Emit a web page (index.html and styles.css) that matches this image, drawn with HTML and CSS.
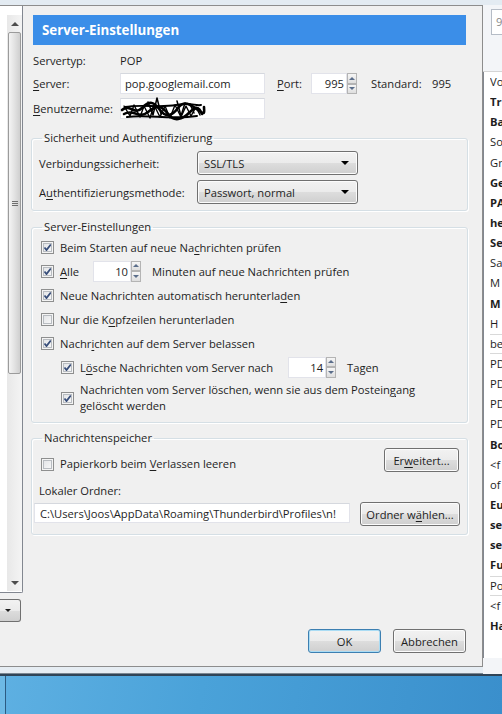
FILE: index.html
```html
<!DOCTYPE html>
<html lang="de">
<head>
    <meta charset="UTF-8">
    <title>Konten-Einstellungen</title>
    <link rel="stylesheet" href="styles.css">
</head>
<body>
<div id="screen">
    <div id="workspace">
        <div id="dialog">
            <div id="client">
                <!-- Kontenbaum links, nur der Rand mit Scrollbar ist sichtbar -->
                <div id="tree-pane">
                    <div class="tree-box">
                        <div class="scrollbar">
                            <div class="sb-btn"><span class="arrow-up"></span></div>
                            <div class="sb-thumb"><span class="grip"></span></div>
                            <div class="sb-track"></div>
                            <div class="sb-btn"><span class="arrow-down"></span></div>
                        </div>
                    </div>
                    <div class="tree-actions"><span class="arrow-down small"></span></div>
                </div>

                <div id="settings">
                    <div class="page-title">Server-Einstellungen</div>

                    <div class="server-rows">
                        <div class="row">
                            <span class="lbl">Servertyp:</span>
                            <span>POP</span>
                        </div>
                        <div class="row">
                            <span class="lbl"><u>S</u>erver:</span>
                            <span class="textbox host">pop.googlemail.com</span>
                            <span class="lbl-port"><u>P</u>ort:</span>
                            <span class="spinner port"><span class="spin-value">995</span><span class="spin-btns"><span class="spin up"></span><span class="spin down"></span></span></span>
                            <span class="lbl-std">Standard:</span>
                            <span>995</span>
                        </div>
                        <div class="row">
                            <span class="lbl"><u>B</u>enutzername:</span>
                            <span class="textbox host user">
                                <!-- geschwärzter Benutzername -->
                                <svg class="scribble" width="86" height="28" viewBox="0 0 86 28">
                                    <g fill="none" stroke="#000" stroke-linecap="round" stroke-linejoin="round">
                                        <path d="M2 15 C10 8 14 21 22 13 S34 7 40 15 S52 21 58 13 S70 9 78 15 S84 17 84 12" stroke-width="2.6"/>
                                        <path d="M4 19 C14 13 18 25 28 17 S42 11 48 19 S62 25 70 17 S80 15 82 19" stroke-width="2.6"/>
                                        <path d="M5 12 C20 9 40 13 56 10 S74 11 81 10" stroke-width="2"/>
                                        <path d="M7 22 C28 19 50 25 77 21" stroke-width="2"/>
                                        <path d="M4 11 L10 21 L14 10 L20 22 L24 11 L30 23 L34 10 L40 22 L45 11 L50 23 L55 10 L61 22 L66 11 L71 21 L76 12 L80 20" stroke-width="1.4"/>
                                        <path d="M28 7 L33 20 L37 3 L41 19 M57 6 L61 21 L65 8 M70 9 L74 18" stroke-width="1.5"/>
                                    </g>
                                </svg>
                            </span>
                        </div>
                    </div>

                    <fieldset class="group security">
                        <legend>Sicherheit und Authentifizierung</legend>
                        <div class="row">
                            <span class="lbl-wide">Verbi<u>n</u>dungssicherheit:</span>
                            <span class="menulist">SSL/TLS<span class="drop"></span></span>
                        </div>
                        <div class="row">
                            <span class="lbl-wide">A<u>u</u>thentifizierungsmethode:</span>
                            <span class="menulist">Passwort, normal<span class="drop"></span></span>
                        </div>
                    </fieldset>

                    <fieldset class="group server">
                        <legend>Server-Einstellungen</legend>
                        <div class="check-row"><span class="checkbox on"></span><span>Beim Starten auf neue Na<u>c</u>hrichten prüfen</span></div>
                        <div class="check-row">
                            <span class="checkbox on"></span><span class="alle"><u>A</u>lle</span>
                            <span class="spinner minutes"><span class="spin-value">10</span><span class="spin-btns"><span class="spin up"></span><span class="spin down"></span></span></span>
                            <span class="after-spin">Minuten auf neue Nachrichten prüfen</span>
                        </div>
                        <div class="check-row"><span class="checkbox on"></span><span>Neue Nachrichten automatisch herunterla<u>d</u>en</span></div>
                        <div class="check-row"><span class="checkbox"></span><span>Nur die K<u>o</u>pfzeilen herunterladen</span></div>
                        <div class="check-row"><span class="checkbox on"></span><span>Nachr<u>i</u>chten auf dem Server belassen</span></div>
                        <div class="check-row nested">
                            <span class="checkbox on"></span><span>L<u>ö</u>sche Nachrichten vom Server nach</span>
                            <span class="spinner days"><span class="spin-value">14</span><span class="spin-btns"><span class="spin up"></span><span class="spin down"></span></span></span>
                            <span class="after-spin">Tagen</span>
                        </div>
                        <div class="check-row nested two-lines">
                            <span class="checkbox on"></span>
                            <span>Nachrichten vom Server löschen, wenn sie aus dem Postein<u>g</u>ang<br>gelöscht werden</span>
                        </div>
                    </fieldset>

                    <fieldset class="group storage">
                        <legend>Nachrichtenspeicher</legend>
                        <div class="trash">
                            <span class="checkbox"></span><span class="trash-label">Papierkorb beim <u>V</u>erlassen leeren</span>
                            <span class="button advanced"><span>Er<u>w</u>eitert...</span></span>
                        </div>
                        <div class="local-label">Lokaler Ordner:</div>
                        <div class="folder">
                            <span class="textbox path">C:\Users\Joos\AppData\Roaming\Thunderbird\Profiles\n!</span>
                            <span class="button choose"><span>Ordner w<u>ä</u>hlen...</span></span>
                        </div>
                    </fieldset>

                    <div class="dialog-buttons">
                        <span class="button default">OK</span>
                        <span class="button">Abbrechen</span>
                    </div>
                </div>
            </div>
        </div>

        <!-- Nachrichtenliste des Hauptfensters dahinter -->
        <div id="mail-window">
            <div class="search"><span>9</span></div>
            <div class="mail-head"></div>
            <div class="mail-list">
                <div class="mail">Vo</div>
                <div class="mail unread">Tr</div>
                <div class="mail unread">Ba</div>
                <div class="mail">So</div>
                <div class="mail">Gr</div>
                <div class="mail unread">Ge</div>
                <div class="mail unread">PA</div>
                <div class="mail unread">he</div>
                <div class="mail unread">Se</div>
                <div class="mail">Sa</div>
                <div class="mail">M</div>
                <div class="mail unread">M</div>
                <div class="mail">H</div>
                <div class="mail marked">be</div>
                <div class="mail">PD</div>
                <div class="mail">PD</div>
                <div class="mail">PD</div>
                <div class="mail">PD</div>
                <div class="mail unread">Bo</div>
                <div class="mail">&lt;f</div>
                <div class="mail">of</div>
                <div class="mail unread">Eu</div>
                <div class="mail unread">se</div>
                <div class="mail unread">se</div>
                <div class="mail unread">Fu</div>
                <div class="mail marked">Po</div>
                <div class="mail">&lt;f</div>
                <div class="mail unread">Ha</div>
            </div>
        </div>
    </div>
    <div id="taskbar"><span class="start-edge"></span></div>
</div>
</body>
</html>
```

FILE: styles.css
```css
* { box-sizing: border-box; }
html, body { margin: 0; padding: 0; }
body {
    width: 502px; height: 714px; overflow: hidden;
    font-family: "Open Sans", "Noto Sans", sans-serif;
    font-size: 11.2px;
    color: #1e1e1e;
    background: #e3ebf2;
}
u { text-decoration-thickness: 1px; text-underline-offset: 2px; }

#screen { display: flex; flex-direction: column; height: 714px; }
#workspace { display: flex; height: 674px; padding-top: 5px; background: #e3ebf2; }

/* Dialogfenster mit schmalem Rahmen */
#dialog {
    width: 489px; flex: none;
    padding: 0 5px 6px 0;
    background: #e6edf3;
    border-right: 1px solid #7c8791;
    border-bottom: 1px solid #7c8791;
    border-bottom-right-radius: 6px;
}
#client {
    display: flex; height: 100%;
    background: #f0f0f0;
    border-top: 1px solid #8d8d8d;
    border-right: 1px solid #8d8d8d;
    border-bottom: 1px solid #8d8d8d;
}

/* Kontenbaum */
#tree-pane { width: 23px; flex: none; display: flex; flex-direction: column; }
.tree-box {
    height: 587px;
    border-right: 1px solid #828790;
    border-bottom: 1px solid #828790;
    border-bottom-right-radius: 2px;
    background: #fff;
    padding: 9px 0 1px 7px;
}
.scrollbar { display: flex; flex-direction: column; height: 100%; width: 15px; background: linear-gradient(90deg, #e8e8e8, #f4f4f4); }
.sb-btn { height: 17px; display: flex; align-items: center; justify-content: center; }
.sb-thumb {
    height: 342px; margin: 0 1px;
    border: 1px solid #9b9b9b; border-radius: 2px;
    background: linear-gradient(90deg, #f4f4f4, #e2e2e2 50%, #cfcfcf);
    display: flex; align-items: center; justify-content: center;
}
.grip { width: 6px; height: 5px; border-top: 1px solid #6e6e6e; border-bottom: 1px solid #6e6e6e; }
.grip::after { content: ""; display: block; margin-top: 1px; border-top: 1px solid #6e6e6e; }
.sb-track { flex: 1; }
.arrow-up { border: 4px solid transparent; border-bottom: 4px solid #4d4d4d; border-top: 0; width: 0; height: 0; }
.arrow-down { border: 4px solid transparent; border-top: 4px solid #4d4d4d; border-bottom: 0; width: 0; height: 0; }
.arrow-down.small { border-width: 3px 3px 0; border-top-color: #1e1e1e; }
.tree-actions {
    margin-top: 6px; height: 23px; width: 21px;
    border: 1px solid #707070; border-left: 0; border-radius: 0 3px 3px 0;
    background: linear-gradient(#f2f2f2, #ebebeb 50%, #dddddd 51%, #cfcfcf);
    display: flex; align-items: center; justify-content: center; padding-right: 4px;
}

/* Einstellungsseite */
#settings { flex: 1; padding: 9px 16px 0 10px; display: flex; flex-direction: column; }
.page-title {
    height: 30px; padding-left: 9px;
    background: #3b8ee8;
    color: #fff; font-weight: bold; font-size: 13.3px;
    display: flex; align-items: center;
}
.row { display: flex; align-items: center; }
.server-rows { margin-top: 6px; display: flex; flex-direction: column; gap: 4px; }
.server-rows .row:first-child { height: 18px; }
.lbl { width: 87px; flex: none; }
.textbox {
    height: 21px; background: #fff;
    border: 1px solid #e2e3ea; border-top-color: #d5d8de;
    display: flex; align-items: center; padding-left: 4px;
}
.host { width: 145px; }
.user { position: relative; }
.scribble { position: absolute; left: -1px; top: -4px; }
.lbl-port { margin-left: 12px; width: 34px; }
.lbl-std { margin-left: 14px; width: 61px; }

.spinner { display: flex; height: 21px; flex: none; }
.spin-value {
    flex: 1; background: #fff; border: 1px solid #e2e3ea;
    text-align: right; padding-right: 2px; line-height: 19px;
}
.spin-btns { width: 10px; display: flex; flex-direction: column; }
.spin {
    flex: 1; border: 1px solid #b4b4b4; background: linear-gradient(#f6f6f6, #dedede);
    display: flex; align-items: center; justify-content: center;
}
.spin.up::before { content: ""; border: 3px solid transparent; border-bottom: 3px solid #5a6d8a; border-top: 0; }
.spin.down::before { content: ""; border: 3px solid transparent; border-top: 3px solid #5a6d8a; border-bottom: 0; }
.port { width: 46px; }
.minutes { width: 48px; }
.days { width: 48px; margin-left: 15px; }
.after-spin { margin-left: 11px; }

/* Gruppenrahmen */
.group {
    margin: 0 -2px; padding: 0 7px;
    border: 1px solid #d5dfe5; border-radius: 3px;
    box-shadow: inset 1px 1px 0 #fff, 1px 1px 0 #fff;
}
.group legend { padding: 0 2px; margin-left: 3px; line-height: 16px; }
.security { margin-top: 11px; height: 81px; }
.security .row { height: 24px; margin-top: 5px; }
.security .row:first-child { margin-top: 4px; }
.lbl-wide { width: 158px; flex: none; }
.menulist {
    width: 161px; height: 24px;
    border: 1px solid #707070; border-radius: 3px;
    background: linear-gradient(#f2f2f2, #ebebeb 50%, #dddddd 51%, #cfcfcf);
    padding-left: 6px; display: flex; align-items: center;
    box-shadow: inset 0 0 0 1px #fcfcfc;
}
.drop { margin-left: auto; margin-right: 8px; border: 4px solid transparent; border-top: 4px solid #000; border-bottom: 0; }

.server { margin-top: 8px; height: 204px; padding-top: 0; }
.check-row { display: flex; align-items: center; height: 24px; padding-left: 2px; white-space: nowrap; }
.checkbox {
    width: 13px; height: 13px; flex: none; margin-right: 6px;
    border: 1px solid #8e8f8f;
    box-shadow: inset 0 0 0 1px #f4f4f4, inset 0 0 0 2px #b8bcc1;
    background: linear-gradient(135deg, #dfe1e4, #fbfbfb);
}
.checkbox.on {
    background-image: url("data:image/svg+xml,%3Csvg xmlns='http://www.w3.org/2000/svg' width='11' height='11'%3E%3Cpath d='M2.5 5.5 L4.5 8 L8.8 2.5' fill='none' stroke='%23384e7a' stroke-width='1.8'/%3E%3C/svg%3E"), linear-gradient(135deg, #dfe1e4, #fbfbfb);
    background-repeat: no-repeat;
    background-position: center;
}
.alle { width: 33px; }
.nested { padding-left: 22px; }
.two-lines { height: 32px; line-height: 16px; margin-top: 3px; }

.storage { margin-top: 7px; height: 105px; }
.trash { display: flex; height: 24px; margin-top: 2px; padding-left: 2px; }
.trash .checkbox { align-self: flex-end; margin-bottom: 1px; }
.trash-label { align-self: flex-end; line-height: 16px; }
.trash .button { margin-left: auto; margin-right: 1px; }
.local-label { margin-top: 11px; line-height: 16px; }
.folder { display: flex; align-items: flex-start; margin: 3px -6px 0 -5px; }
.path { width: 316px; height: 20px; margin-top: 1px; padding-left: 5px; white-space: nowrap; overflow: hidden; }
.choose { margin-left: 10px; }

.button {
    height: 24px; padding: 0 7px; flex: none;
    border: 1px solid #707070; border-radius: 3px;
    background: linear-gradient(#f2f2f2, #ebebeb 50%, #dddddd 51%, #cfcfcf);
    box-shadow: inset 0 0 0 1px #fcfcfc;
    display: inline-flex; align-items: center; justify-content: center;
    white-space: nowrap;
}
.advanced { width: 75px; }
.choose { width: 100px; }

.dialog-buttons { margin-top: auto; margin-bottom: 13px; display: flex; justify-content: flex-end; gap: 12px; }
.dialog-buttons .button { width: 73px; }
.button.default { border-color: #3c7fb1; box-shadow: inset 0 0 0 1px #aadcf4; }

/* Hauptfenster-Ausschnitt */
#mail-window { flex: 1; display: flex; flex-direction: column; margin-left: -6px; background: #f3f5f8; }
.search { height: 26px; margin: 4px 0 0 8px; background: #fff; border: 1px solid #b5bcc6; border-right: 0; color: #8a8a8a; padding-left: 4px; line-height: 24px; }
.mail-head { height: 37px; border-bottom: 1px solid #d5d5d5; }
.mail-list { background: #fff; border-left: 1px solid #828790; height: 586px; padding-left: 6px; }
.mail { height: 20.15px; line-height: 20px; white-space: nowrap; overflow: hidden; }
.mail.unread { font-weight: bold; }
.mail.marked { border-top: 1px solid #d9d9d9; border-bottom: 1px solid #d9d9d9; line-height: 18px; }

#taskbar {
    flex: 1; display: flex;
    border-top: 2px solid #2f4457;
    background: linear-gradient(100deg, #5eb0e2, #4aa2d9 40%, #3a8fcc);
}
.start-edge { width: 6px; border-right: 1px solid #2c5b82; background: #6db9e5; }
```
